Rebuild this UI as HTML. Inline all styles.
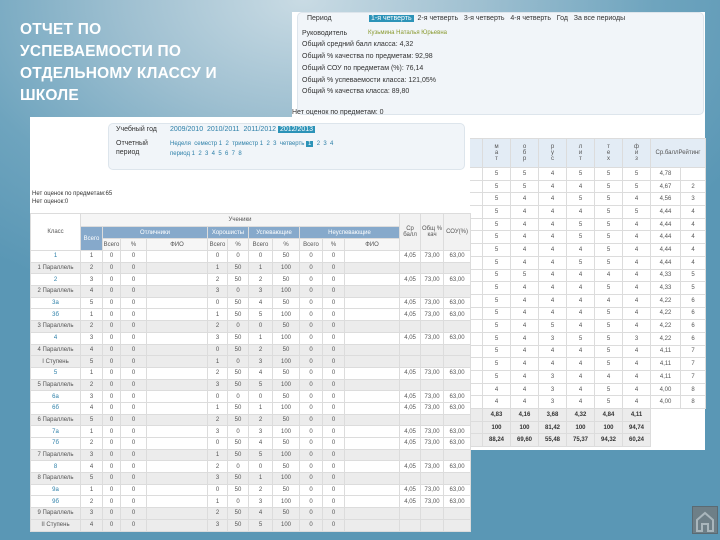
<!DOCTYPE html>
<html><head><meta charset="utf-8">
<style>
*{margin:0;padding:0;box-sizing:border-box}
body{width:720px;height:540px;overflow:hidden;position:relative;font-family:"Liberation Sans","Noto Sans CJK SC",sans-serif;
background:radial-gradient(ellipse 70% 60% at 42% 0%,#c9dbe4 0%,#9fc0d1 35%,#6ea4be 70%,#5a97b5 100%);}
.title{position:absolute;left:20px;top:19px;color:#fff;font-weight:bold;font-size:15.5px;line-height:22px;letter-spacing:0.2px}
.rp{position:absolute;left:292px;top:12px;width:413px;height:438px;background:#fff}
.box{position:absolute;background:#f1f5f9;border:1px solid #dde5ec;border-radius:5px}
.t{position:absolute;font-size:7px;color:#333;white-space:nowrap}
.sel{background:#2c93b8;color:#fff;padding:0 2px}
.lp{position:absolute;left:30px;top:117px;width:440px;height:413px;background:#fff}
table{border-collapse:collapse;position:absolute;table-layout:fixed}
td{border:1px solid #dcdcdc;font-size:6px;line-height:6px;color:#555;text-align:center;padding:0;overflow:hidden;white-space:nowrap}
.g td{background:#ececec}
.home{position:absolute;left:692px;top:506px;width:26px;height:28px;background:#6e7f87;border:1px solid #5b6a72}
</style></head><body>
<div class="title">ОТЧЕТ ПО<br>УСПЕВАЕМОСТИ ПО<br>ОТДЕЛЬНОМУ КЛАССУ И<br>ШКОЛЕ</div>

<div class="rp">
 <div class="box" style="left:5px;top:0;width:407px;height:103px"></div>
 <div class="t" style="left:15px;top:3px">Период</div>
 <div class="t" style="left:77px;top:3px"><span class="sel">1-я четверть</span>&nbsp; 2-я четверть&nbsp;&nbsp; 3-я четверть&nbsp;&nbsp; 4-я четверть&nbsp;&nbsp; Год&nbsp;&nbsp; За все периоды</div>
 <div class="t" style="left:10px;top:18px">Руководитель</div>
 <div class="t" style="left:76px;top:18px;color:#8a9a30;font-size:6px">Кузьмина Наталья Юрьевна</div>
 <div class="t" style="left:10px;top:29px">Общий средний балл класса: 4,32</div>
 <div class="t" style="left:10px;top:41px">Общий % качества по предметам: 92,98</div>
 <div class="t" style="left:10px;top:53px">Общий СОУ по предметам (%): 76,14</div>
 <div class="t" style="left:10px;top:65px">Общий % успеваемости класса: 121,05%</div>
 <div class="t" style="left:10px;top:76px">Общий % качества класса: 89,80</div>
 <div class="t" style="left:0;top:97px">Нет оценок по предметам: 0</div>
 <table style="left:0;top:126px;width:413px">
  <colgroup><col style="width:190px"><col style="width:28px"><col style="width:28px"><col style="width:28px"><col style="width:28px"><col style="width:28px"><col style="width:28px"><col style="width:55px"></colgroup>
  <tr style="height:29px;background:#e3ecf5"><td></td><td>м<br>а<br>т</td><td>о<br>б<br>р</td><td>р<br>у<br>с</td><td>л<br>и<br>т</td><td>т<br>е<br>х</td><td>ф<br>и<br>з</td><td>Ср.баллРейтинг</td></tr>
 </table>
 <table id="rt" style="left:0;top:155px;width:413px">
  <colgroup><col style="width:190px"><col style="width:28px"><col style="width:28px"><col style="width:28px"><col style="width:28px"><col style="width:28px"><col style="width:28px"><col style="width:30px"><col style="width:25px"></colgroup>
 </table>
</div>

<div class="lp">
 <div class="box" style="left:78px;top:6px;width:357px;height:47px"></div>
 <div class="t" style="left:86px;top:9px">Учебный год</div>
 <div class="t" style="left:140px;top:9px;color:#2c7fa8">2009/2010&nbsp; 2010/2011&nbsp; 2011/2012 <span class="sel">2012/2013</span></div>
 <div class="t" style="left:86px;top:22px;line-height:9px">Отчетный<br>период</div>
 <div class="t" style="left:140px;top:22px;color:#2c7fa8;font-size:6px;line-height:10px">Неделя&nbsp; семестр 1&nbsp; 2&nbsp; триместр 1&nbsp; 2&nbsp; 3&nbsp; четверть <span class="sel">1</span>&nbsp; 2&nbsp; 3&nbsp; 4<br>период 1&nbsp; 2&nbsp; 3&nbsp; 4&nbsp; 5&nbsp; 6&nbsp; 7&nbsp; 8</div>
 <div class="t" style="left:2px;top:74px;font-size:6px">Нет оценок по предметам:65</div>
 <div class="t" style="left:2px;top:82px;font-size:6px">Нет оценок:0</div>
 <table id="lt" style="left:0;top:96px;width:440px">
  <colgroup><col style="width:50px"><col style="width:22px"><col style="width:18px"><col style="width:26px"><col style="width:61px"><col style="width:20px"><col style="width:21px"><col style="width:24px"><col style="width:27px"><col style="width:23px"><col style="width:22px"><col style="width:55px"><col style="width:21px"><col style="width:23px"><col style="width:27px"></colgroup>
  <tr style="height:13px"><td rowspan="3">Класс</td><td colspan="11" style="background:#f5f5f5">Ученики</td><td rowspan="3" style="background:#f2f2f2">Ср<br>балл</td><td rowspan="3" style="background:#f2f2f2">Общ %<br>кач</td><td rowspan="3" style="background:#f2f2f2">СОУ(%)</td></tr>
  <tr style="height:12px;background:#86a9cb"><td rowspan="2" style="background:#86a9cb;color:#fff">Всего</td><td colspan="3" style="color:#fff">Отличники</td><td colspan="2" style="color:#fff">Хорошисты</td><td colspan="2" style="color:#fff">Успевающие</td><td colspan="3" style="color:#fff">Неуспевающие</td></tr>
  <tr style="height:12px;background:#f6f6f6"><td>Всего</td><td>%</td><td>ФИО</td><td>Всего</td><td>%</td><td>Всего</td><td>%</td><td>Всего</td><td>%</td><td>ФИО</td></tr>
 </table>
</div>
<div class="home"><svg width="24" height="26" viewBox="0 0 24 26"><path d="M4 24V13L12 6L20 13V24H15V17H9V24Z" fill="none" stroke="#a9b6bc" stroke-width="2"/></svg></div>

<script>
var rt=document.getElementById('rt'),h='';
var d=[['5','5','4','5','5','5','4,78',''],['5','5','4','4','5','5','4,67','2'],['5','4','4','5','5','4','4,56','3'],['5','4','4','4','5','5','4,44','4'],['5','4','4','5','5','4','4,44','4'],['5','4','4','5','5','4','4,44','4'],['5','4','4','4','5','4','4,44','4'],['5','4','4','5','5','4','4,44','4'],['5','5','4','4','4','4','4,33','5'],['5','4','4','4','5','4','4,33','5'],['5','4','4','4','4','4','4,22','6'],['5','4','4','4','5','4','4,22','6'],['5','4','5','4','5','4','4,22','6'],['5','4','3','5','5','3','4,22','6'],['5','4','4','4','5','4','4,11','7'],['5','4','4','4','5','4','4,11','7'],['5','4','3','4','4','4','4,11','7'],['4','4','3','4','5','4','4,00','8'],['4','4','3','4','5','4','4,00','8']];
d.forEach(function(r){h+='<tr style="height:12.7px"><td></td>';r.forEach(function(c){h+='<td>'+c+'</td>'});h+='</tr>'});
[['4,83','4,16','3,68','4,32','4,84','4,11'],['100','100','81,42','100','100','94,74'],['88,24','69,60','55,48','75,37','94,32','60,24']].forEach(function(r){h+='<tr style="height:12.7px;font-weight:bold"><td style="background:#ececec"></td>';r.forEach(function(c){h+='<td style="background:#ececec;color:#333">'+c+'</td>'});h+='<td style="border:none"></td><td style="border:none"></td></tr>'});
rt.insertAdjacentHTML('beforeend',h);
var lt=document.getElementById('lt');
var L=[['1',0],['1 Параллель',1],['2',0],['2 Параллель',1],['3а',0],['3б',0],['3 Параллель',1],['4',0],['4 Параллель',1],['I Ступень',1],['5',0],['5 Параллель',1],['6а',0],['6б',0],['6 Параллель',1],['7а',0],['7б',0],['7 Параллель',1],['8',0],['8 Параллель',1],['9а',0],['9б',0],['9 Параллель',1],['II Ступень',1]];
var s='';
L.forEach(function(r,i){var g=r[1];s+='<tr style="height:11.7px" class="'+(g?'g':'')+'"><td style="color:'+(g?'#555':'#2c7fa8')+'">'+r[0]+'</td><td>'+(i%5+1)+'</td><td>0</td><td>0</td><td></td><td>'+(i%4)+'</td><td>'+(i%3?'50':'0')+'</td><td>'+(i%6)+'</td><td>'+(i%2?'100':'50')+'</td><td>0</td><td>0</td><td></td><td>'+(g?'':'4,05')+'</td><td>'+(g?'':'73,00')+'</td><td>'+(g?'':'63,00')+'</td></tr>'});
lt.insertAdjacentHTML('beforeend',s);
</script>
</body></html>
